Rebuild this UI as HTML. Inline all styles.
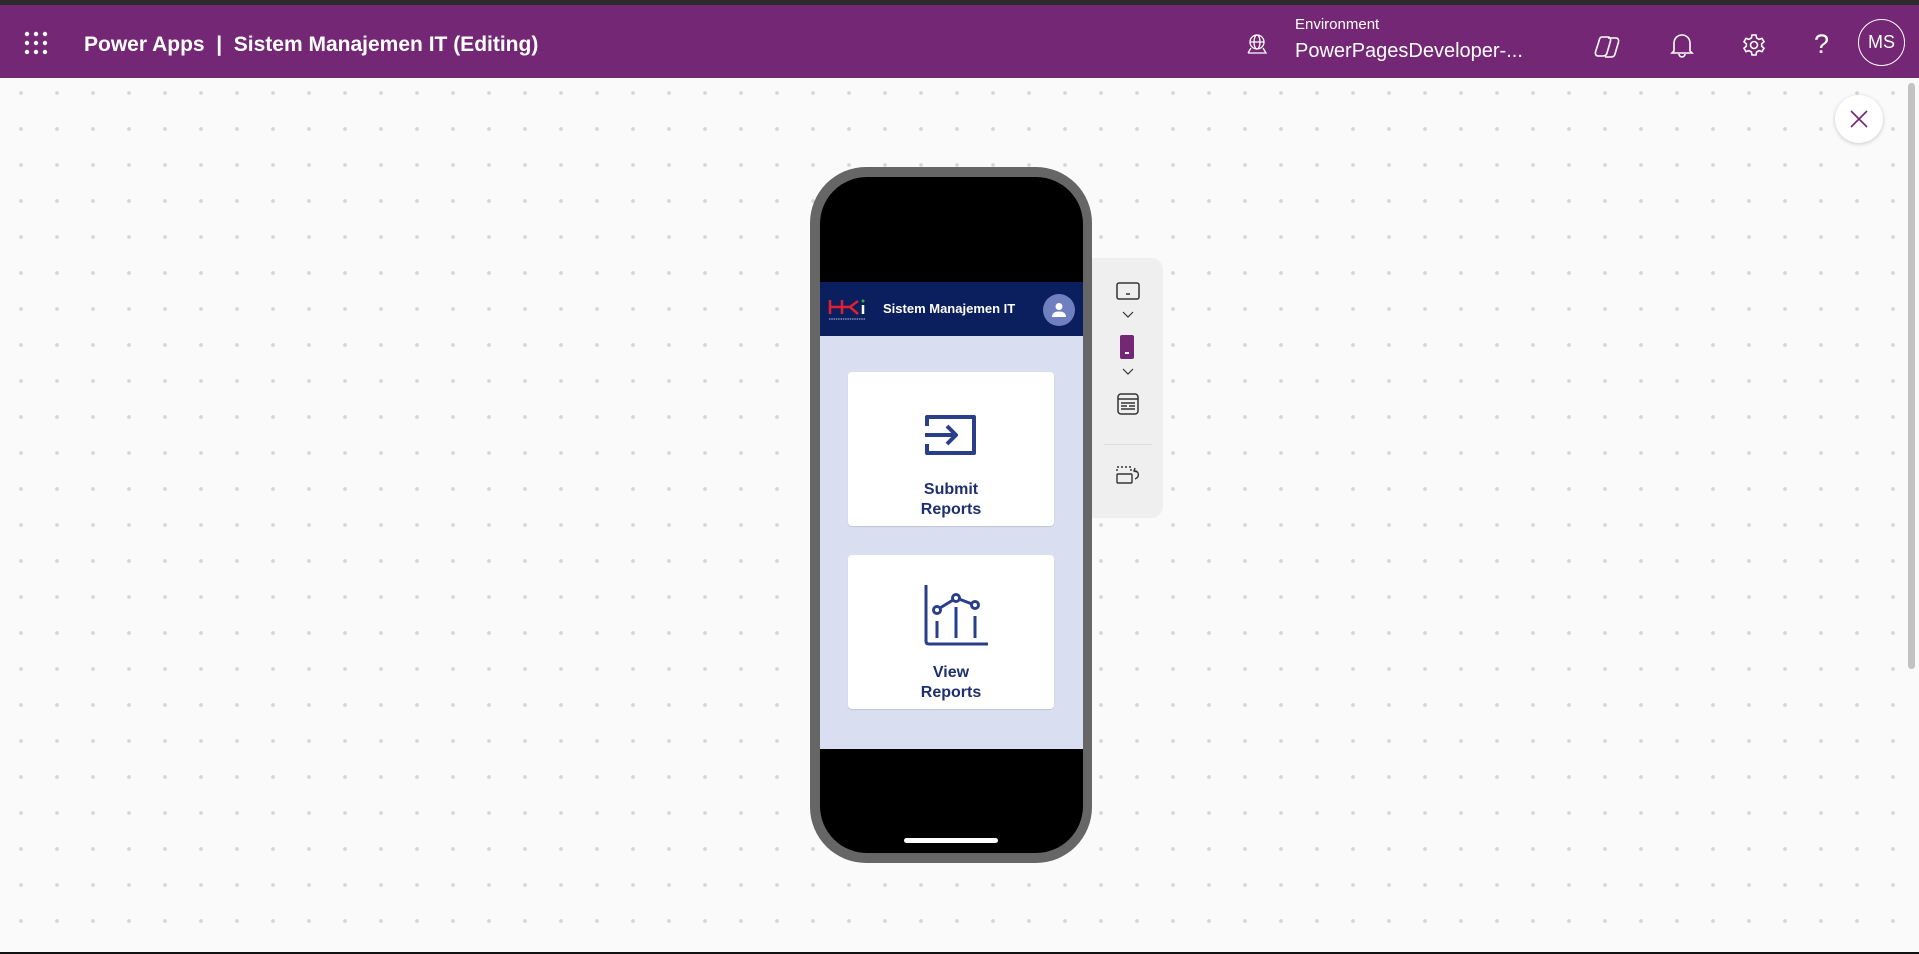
<!DOCTYPE html>
<html><head><meta charset="utf-8"><style>
*{margin:0;padding:0;box-sizing:border-box}
body{width:1919px;height:954px;overflow:hidden;position:relative;font-family:"Liberation Sans",sans-serif;background:#fafafa;
background-image:radial-gradient(circle,#d6d6d6 1.6px,transparent 2.2px);background-size:36px 36px;background-position:3px 3px}
.top{position:absolute;left:0;top:0;width:1919px;height:5px;background:#2b2b2b}
.hdr{position:absolute;left:0;top:5px;width:1919px;height:73px;background:#742774;color:#fff}
.abs{position:absolute}
.bot{position:absolute;left:0;top:952px;width:1919px;height:2px;background:#111}
</style></head><body>
<div class="top"></div>
<div class="hdr">
 <svg class="abs" style="left:24px;top:26px" width="24" height="24" viewBox="0 0 24 24" fill="#fff">
  <circle cx="3" cy="3" r="2.2"/><circle cx="12" cy="3" r="2.2"/><circle cx="21" cy="3" r="2.2"/>
  <circle cx="3" cy="12" r="2.2"/><circle cx="12" cy="12" r="2.2"/><circle cx="21" cy="12" r="2.2"/>
  <circle cx="3" cy="21" r="2.2"/><circle cx="12" cy="21" r="2.2"/><circle cx="21" cy="21" r="2.2"/></svg>
 <div class="abs" style="left:84px;top:28px;font-size:21px;font-weight:bold;white-space:nowrap">Power Apps&nbsp; | &nbsp;Sistem Manajemen IT (Editing)</div>
 <svg class="abs" style="left:1246px;top:28px" width="22" height="22" viewBox="0 0 22 22" fill="none" stroke="#fff" stroke-width="1.3">
  <circle cx="11" cy="9" r="7"/><ellipse cx="11" cy="9" rx="3" ry="7"/><path d="M4 9h14M2 20h18l-3-5M2 20l3-5"/></svg>
 <div class="abs" style="left:1295px;top:11px;font-size:15px">Environment</div>
 <div class="abs" style="left:1295px;top:35px;font-size:20px">PowerPagesDeveloper-...</div>
 <svg class="abs" style="left:1594px;top:29px" width="28" height="26" viewBox="0 0 28 26" fill="none" stroke="#fff" stroke-width="1.6">
  <path d="M8 3h6c2 0 3 2 2.5 4l-3.5 12c-.5 2-2 3-4 3H4c-2 0-3-2-2.5-4l3.5-11C5.5 4 6.5 3 8 3z"/><path d="M14 4h8c2 0 3 2 2.5 4l-3.5 12c-.5 2-2 3-4 3h-6"/></svg>
 <svg class="abs" style="left:1670px;top:27px" width="24" height="26" viewBox="0 0 24 26" fill="none" stroke="#fff" stroke-width="1.6">
  <path d="M4 19V11a8 8 0 0116 0v8l2 2H2z"/><path d="M9 22a3 3 0 006 0"/></svg>
 <svg class="abs" style="left:1742px;top:28px" width="24" height="24" viewBox="0 0 24 24" fill="none" stroke="#fff" stroke-width="1.6">
  <circle cx="12" cy="12" r="3.5"/><path d="M10 2h4l.6 3 2.5 1.4 2.9-1 2 3.4-2.3 2v2.4l2.3 2-2 3.4-2.9-1-2.5 1.4-.6 3h-4l-.6-3-2.5-1.4-2.9 1-2-3.4 2.3-2v-2.4L2 8.8l2-3.4 2.9 1 2.5-1.4z"/></svg>
 <div class="abs" style="left:1814px;top:24px;font-size:27px">?</div>
 <div class="abs" style="left:1858px;top:14px;width:47px;height:47px;border:1.5px solid #fff;border-radius:50%;font-size:18px;line-height:44px;text-align:center">MS</div>
</div>
<div class="abs" style="left:1835px;top:95px;width:48px;height:48px;border-radius:50%;background:#fff;box-shadow:0 1px 4px rgba(0,0,0,.2)">
 <svg class="abs" style="left:15px;top:15px" width="18" height="18" viewBox="0 0 18 18" stroke="#742774" stroke-width="1.6"><path d="M1 1l16 16M17 1L1 17"/></svg></div>
<div class="abs" style="left:1908px;top:83px;width:7px;height:586px;background:#c2c2c2;border-radius:4px"></div>

<!-- phone -->
<div class="abs" style="left:810px;top:167px;width:282px;height:696px;background:#666;border-radius:56px"></div>
<div class="abs" style="left:820px;top:177px;width:263px;height:676px;background:#000;border-radius:47px;overflow:hidden">
 <div class="abs" style="left:0;top:105px;width:263px;height:54px;background:#0b1f5e"></div>
 <svg class="abs" style="left:8px;top:121px" width="40" height="24" viewBox="0 0 40 24" fill="none" stroke="#e02030" stroke-width="2.5">
  <path d="M2 2v14M2 9h12M14 2v14M14 9h8l8-6M22 9l8 7"/><path d="M35 7v9" stroke="#fff"/><circle cx="35" cy="3" r="1.5" fill="#3ab040" stroke="none"/>
  <path d="M1 21h36" stroke="#9aa4c8" stroke-width="1.2" stroke-dasharray="1.5 .8"/></svg>
 <div class="abs" style="left:63px;top:124px;font-size:13px;font-weight:bold;color:#fff;white-space:nowrap">Sistem Manajemen IT</div>
 <div class="abs" style="left:223px;top:117px;width:32px;height:32px;border-radius:50%;background:#6f7fbf">
  <svg class="abs" style="left:8px;top:8px" width="16" height="16" viewBox="0 0 16 16" fill="#fff"><circle cx="8" cy="4.5" r="3.5"/><path d="M1 15c0-4 3-5.5 7-5.5s7 1.5 7 5.5z"/></svg></div>
 <div class="abs" style="left:0;top:159px;width:263px;height:413px;background:#d9dff0"></div>
 <div class="abs" style="left:28px;top:195px;width:206px;height:154px;background:#fff;border-radius:4px;box-shadow:0 1px 1px rgba(0,0,0,.12)">
  <svg class="abs" style="left:77px;top:42px" width="52" height="42" viewBox="0 0 52 42" fill="none" stroke="#2a3f8a" stroke-width="4" stroke-linejoin="round">
   <path d="M2 12V3h47v36H2v-9"/><path d="M0 21h30M22 12l9 9-9 9"/></svg>
  <div class="abs" style="left:0;top:108px;width:206px;text-align:center;font-size:16px;font-weight:bold;color:#1d2f6f;line-height:20px">Submit<br>Reports</div>
 </div>
 <div class="abs" style="left:28px;top:378px;width:206px;height:154px;background:#fff;border-radius:4px;box-shadow:0 1px 1px rgba(0,0,0,.12)">
  <svg class="abs" style="left:76px;top:30px" width="64" height="62" viewBox="0 0 64 62" fill="none" stroke="#2a3f8a" stroke-width="3">
   <path d="M2 0v56c0 2 1 3 3 3h59"/><circle cx="13" cy="25" r="3.5"/><circle cx="32" cy="13" r="3.5"/><circle cx="51" cy="20" r="3.5"/>
   <path d="M16 23l13-8M35 14l13 5M13 36v17M32 22v31M51 31v22"/></svg>
  <div class="abs" style="left:0;top:108px;width:206px;text-align:center;font-size:16px;font-weight:bold;color:#1d2f6f;line-height:20px">View<br>Reports</div>
 </div>
 <div class="abs" style="left:84px;top:661px;width:94px;height:5px;border-radius:3px;background:#fff"></div>
</div>

<!-- side toolbar -->
<div class="abs" style="left:1092px;top:258px;width:71px;height:260px;background:#efefef;border-radius:0 12px 12px 0">
 <svg class="abs" style="left:24px;top:24px" width="24" height="20" viewBox="0 0 24 20" fill="none" stroke="#333" stroke-width="1.5"><rect x="1" y="1" width="22" height="16" rx="2"/><path d="M10 12h4"/></svg>
 <svg class="abs" style="left:30px;top:53px" width="12" height="8" viewBox="0 0 12 8" fill="none" stroke="#333" stroke-width="1.2"><path d="M1 1l5 5 5-5"/></svg>
 <div class="abs" style="left:28px;top:77px;width:14px;height:24px;border-radius:2px;background:#742774"><div class="abs" style="left:5px;top:17px;width:4px;height:1.5px;background:#fff"></div></div>
 <svg class="abs" style="left:30px;top:110px" width="12" height="8" viewBox="0 0 12 8" fill="none" stroke="#333" stroke-width="1.2"><path d="M1 1l5 5 5-5"/></svg>
 <svg class="abs" style="left:25px;top:135px" width="22" height="22" viewBox="0 0 22 22" fill="none" stroke="#333" stroke-width="1.5"><rect x="1" y="1" width="20" height="20" rx="3"/><path d="M1 6h20M4 10h14M4 13h6M12 13h6M4 16h14"/></svg>
 <div class="abs" style="left:12px;top:186px;width:48px;height:1px;background:#ddd"></div>
 <svg class="abs" style="left:24px;top:207px" width="26" height="20" viewBox="0 0 26 20" fill="none" stroke="#333" stroke-width="1.4"><path d="M1 6V2h14v4" stroke-dasharray="2 2"/><rect x="1" y="9" width="15" height="9" rx="1"/><path d="M19 6c4 0 5 6 0 8M19 3l-1 3 3 1"/></svg>
</div>
<div class="bot"></div>
</body></html>
